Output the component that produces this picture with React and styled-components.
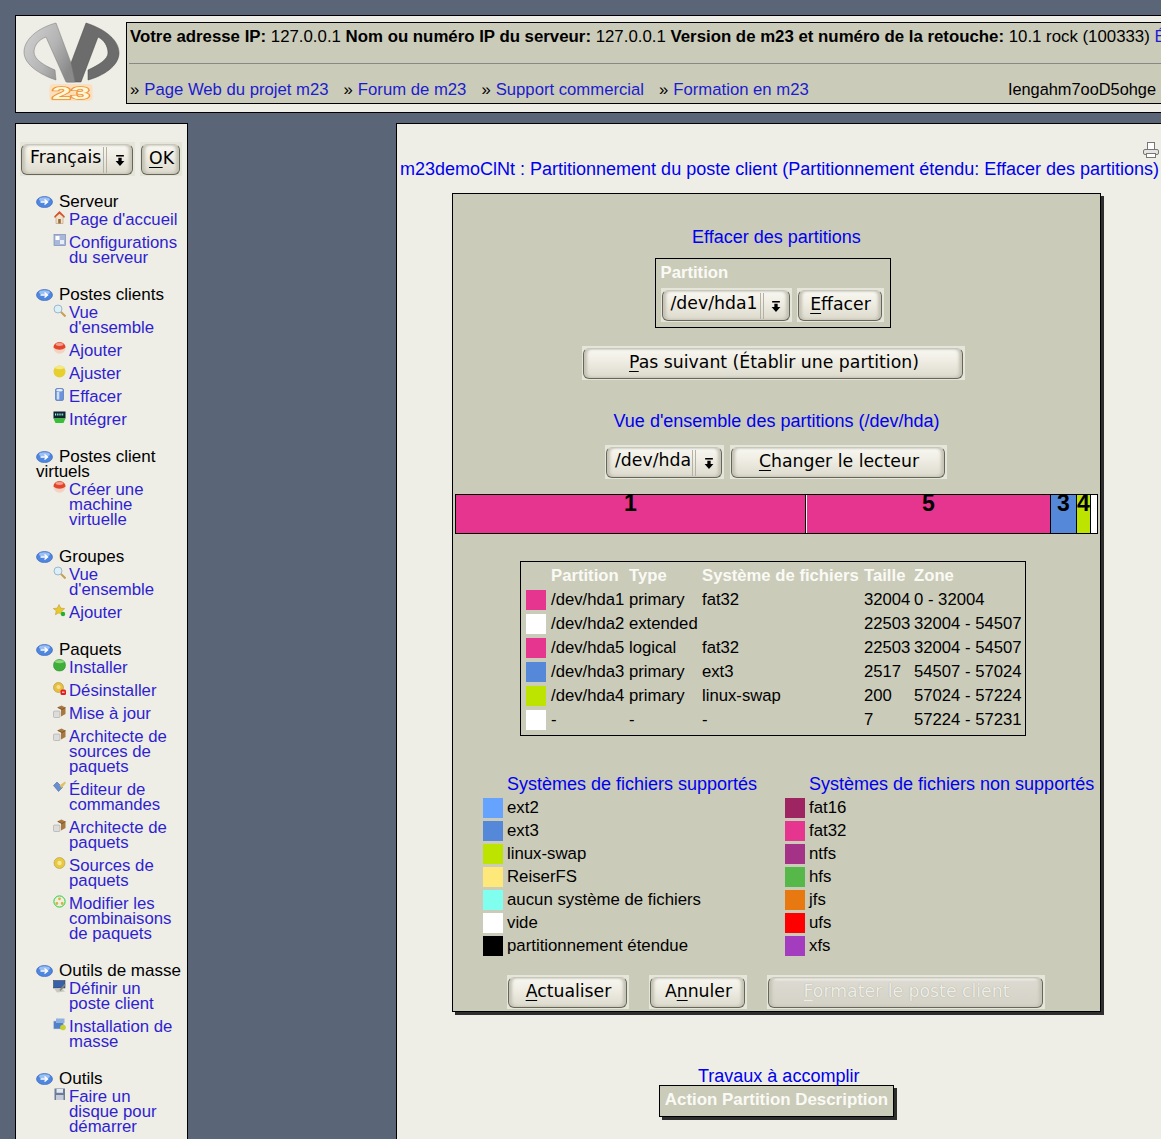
import React from 'react'
import styled, { createGlobalStyle } from 'styled-components'

const GlobalStyle = createGlobalStyle`
    html, body {
        margin: 0;
        padding: 0;
        height: 1139px;
        overflow: hidden;
        background: #5a6577;
        font-family: "Liberation Sans", Arial, sans-serif;
        font-size: 16.7px;
    }
`;

const Page = styled.div`
    width: 1400px;
    height: 1139px;
    padding: 15px;
    box-sizing: border-box;
    display: flex;
    flex-direction: column;
    gap: 10px;
`;

const Header = styled.div`
    display: flex;
    align-items: flex-start;
    height: 98px;
    box-sizing: border-box;
    border: 1px solid #000;
    background: #eeede6;
    padding: 6px 0 0 6px;
    gap: 5px;
`;

const LogoBox = styled.div`
    width: 99px;
    height: 90px;
    flex: none;
`;

const InfoBox = styled.div`
    flex: 1;
    height: 82px;
    box-sizing: border-box;
    border: 1px solid #000;
    background: #cbcbb9;
    padding: 4px 2px 0 2px;
    line-height: 19px;
    white-space: nowrap;
    color: #000;
`;

const InfoLine = styled.div`
    font-size: 16.82px;
    padding-left: 1px;
`;

const Rule = styled.hr`
    border: 0;
    border-top: 1px solid #888;
    margin: 17px 0 16px 0;
`;

const LinksRow = styled.div`
    display: flex;
    width: 1026px;
    padding-left: 1px;
    font-size: 16.7px;
`;

const Chevron = styled.span`
    margin-right: 5px;
`;

const TopLink = styled.span`
    color: #1c1ccf;
    margin-right: ${p => p.$end ? 0 : 15}px;
`;

const ServerKey = styled.span`
    margin-left: auto;
    font-size: 16.35px;
`;

const Columns = styled.div`
    display: flex;
    align-items: flex-start;
    gap: 208px;
    flex: 1;
`;

const Sidebar = styled.nav`
    width: 173px;
    height: 1020px;
    flex: none;
    box-sizing: border-box;
    border: 1px solid #000;
    background: #eeede6;
    padding: 17px 5px 0 5px;
`;

const LangRow = styled.div`
    display: flex;
    gap: 5px;
    margin: 1px 0 18px -1px;
`;

const ButtonHalo = styled.div`
    width: ${p => p.$width}px;
    height: 34px;
    box-sizing: border-box;
    padding: 2px 2px 1px 1px;
    background: #e6e5da;
    flex: none;
`;

const ButtonFace = styled.div`
    display: flex;
    align-items: center;
    justify-content: ${p => p.$select ? 'space-between' : 'center'};
    box-sizing: border-box;
    width: 100%;
    height: 100%;
    border: 1px solid #66665a;
    border-top-color: #c9c7b9;
    border-radius: 6px;
    background: ${p => p.$disabled
        ? 'linear-gradient(#dddbd1, #d4d2c7)'
        : 'linear-gradient(#f8f7f0 0%, #eeece2 45%, #dcd9cc 100%)'};
    box-shadow: inset 3px 0 3px #c4c2b4, inset -3px 0 3px #c4c2b4, inset 0 2px 2px #fff;
    font-family: "DejaVu Sans", sans-serif;
    font-size: 17.3px;
    color: ${p => p.$disabled ? '#efeee6' : '#000'};
    text-shadow: ${p => p.$disabled ? '0 0 1px #9a9a90' : 'none'};
    white-space: nowrap;
    padding: ${p => p.$select ? '0 0 5px 8px' : '0 0 4px 2px'};
`;

const Under = styled.span`
    text-decoration: underline;
    text-underline-offset: 3px;
`;

const SelectArrow = styled.span`
    display: flex;
    align-items: center;
    justify-content: center;
    align-self: stretch;
    width: 25px;
    margin: 2px 0 -4px 0;
    border-left: 4px double #b4b2a5;
`;

const ArrowGlyph = () => (
    <svg width="10" height="11" viewBox="0 0 9 10">
        <rect x="1" y="0" width="7" height="1.4" fill="#000" />
        <path d="M3 2.5h3v3h2.5L4.5 10 .5 5.5H3z" fill="#000" />
    </svg>
);

const Button = ({ width, disabled, children }) => (
    <ButtonHalo $width={width}>
        <ButtonFace $disabled={disabled}><span>{children}</span></ButtonFace>
    </ButtonHalo>
);

const Select = ({ width, value }) => (
    <ButtonHalo $width={width}>
        <ButtonFace $select>{value}<SelectArrow><ArrowGlyph /></SelectArrow></ButtonFace>
    </ButtonHalo>
);

const Section = styled.div`
    margin: 0 0 22px 15px;
`;

const SectionTitle = styled.div`
    font-size: 17px;
    line-height: 15px;
    color: #000;
    margin-bottom: 3px;
    width: 150px;
`;

const BlueBall = styled.svg`
    width: 17px;
    height: 12px;
    vertical-align: -1px;
    margin-right: 6px;
`;

const MenuItem = styled.div`
    display: flex;
    margin: 0 0 8px 17px;
    font-size: 16.75px;
    line-height: 15px;
    color: #2f1fd0;
`;

const MenuLabel = styled.span`
    width: ${p => p.$wrap ? `${p.$wrap}px` : 'auto'};
`;

const MenuIcon = styled.svg`
    width: 13px;
    height: 13px;
    flex: none;
    margin: -1px 3px 0 0;
`;

const Main = styled.main`
    flex: 1;
    height: 1020px;
    box-sizing: border-box;
    border: 1px solid #000;
    background: #eeede6;
    padding: 18px 0 0 3px;
`;

const PrintRow = styled.div`
    height: 17px;
    padding-left: 743px;
`;

const PrintIcon = styled.svg`
    display: block;
    width: 16px;
    height: 17px;
`;

const PageTitle = styled.div`
    color: #0000f0;
    font-size: 18px;
    line-height: 20px;
    height: 20px;
    white-space: nowrap;
`;

const Panel = styled.div`
    width: 649px;
    height: 819px;
    box-sizing: border-box;
    margin: 14px 0 0 52px;
    border: 1px solid #000;
    background: #cbcbb9;
    box-shadow: 3px 3px 0 #2e2e2e;
    display: flex;
    flex-direction: column;
    align-items: center;
    padding-top: 33px;
`;

const BlueHeading = styled.div`
    color: #0000f0;
    font-size: 18px;
    line-height: 20px;
    white-space: nowrap;
`;

const OverviewHeading = styled(BlueHeading)`
    margin-top: 31px;
`;

const PartitionBox = styled.div`
    width: 236px;
    height: 70px;
    box-sizing: border-box;
    border: 1px solid #000;
    margin: 11px 0 0 -8px;
    padding: 4px 5px;
`;

const BoxLabel = styled.div`
    color: #fafaf5;
    font-weight: bold;
    line-height: 19px;
    margin-bottom: 6px;
`;

const ButtonRow = styled.div`
    display: flex;
    gap: ${p => p.$gap || 5}px;
`;

const NextRow = styled.div`
    margin: 18px 0 0 -6px;
`;

const DriveRow = styled(ButtonRow)`
    margin: 14px 0 0 -1px;
`;

const DiskBar = styled.div`
    display: flex;
    width: 643px;
    height: 40px;
    box-sizing: border-box;
    border: 1px solid #000;
    background: #fff;
    margin: 15px 0 0 0;
`;

const DiskPart = styled.div`
    box-sizing: border-box;
    width: ${p => p.$width}px;
    flex: none;
    background: ${p => p.$color};
    border-right: 1px solid #000;
    border-left: ${p => p.$split ? '1px solid #fff' : '0'};
    text-align: center;
    font-weight: bold;
    font-size: 23px;
    line-height: 17px;
    color: #000;
    &:last-child {
        border-right: 0;
    }
`;

const PartTable = styled.div`
    display: grid;
    grid-template-columns: 20px 73px 68px 157px 45px max-content;
    column-gap: 5px;
    margin: 27px 0 0 -7px;
    width: 506px;
    height: 175px;
    box-sizing: border-box;
    border: 1px solid #000;
    padding: 2px 4px 0 5px;
    align-items: center;
    grid-auto-rows: 24px;
    white-space: nowrap;
    color: #000;
`;

const ColHead = styled.div`
    color: #fafaf5;
    font-weight: bold;
`;

const Swatch = styled.div`
    width: 20px;
    height: 20px;
    flex: none;
    background: ${p => p.$color};
`;

const LegendRow = styled.div`
    display: flex;
    align-self: flex-start;
    margin: 37px 0 0 30px;
`;

const LegendCol = styled.div`
    width: 302px;
    flex: none;
`;

const LegendHead = styled(BlueHeading)`
    margin: 0 0 1px 24px;
    line-height: 22px;
`;

const LegendItem = styled.div`
    display: flex;
    align-items: center;
    gap: 4px;
    height: 23px;
    font-size: 16.8px;
    color: #000;
    white-space: nowrap;
`;

const ActionRow = styled.div`
    display: flex;
    align-self: flex-start;
    gap: 20px;
    margin: 18px 0 0 54px;
`;

const TodoTitle = styled(BlueHeading)`
    margin: 54px 0 0 298px;
`;

const TodoBox = styled.div`
    width: 235px;
    height: 32px;
    box-sizing: border-box;
    margin: -1px 0 0 259px;
    border: 1px solid #000;
    background: #cbcbb9;
    box-shadow: 3px 3px 0 #2e2e2e;
    color: #fafaf5;
    font-size: 16.9px;
    font-weight: bold;
    text-align: center;
    line-height: 27px;
    white-space: nowrap;
`;

const Ball = () => (
    <BlueBall viewBox="0 0 17 12">
        <ellipse cx="8.5" cy="6" rx="8" ry="5.6" fill="#4f86e0" stroke="#2f5fb8" strokeWidth="0.6" />
        <ellipse cx="8.5" cy="3.4" rx="5.5" ry="2.2" fill="#9cc0f4" />
        <path d="M4.5 6h6.500M8.500 3.500L11.500 6 8.500 8.500" stroke="#fff" strokeWidth="1.5" fill="none" />
    </BlueBall>
);

const drawings = {
    home: <><path d="M6.500 1L1.500 6.500h1.500V12.500h7V6.500h1.500z" fill="#efe2cc" stroke="#b08a66" strokeWidth="0.5" /><path d="M6.500 0L1 5.500 2.300 6.500 6.500 2.800 10.700 6.500 12 5.500z" fill="#d8532c" /><rect x="5.200" y="8" width="2.600" height="4.500" fill="#9a6a3a" /></>,
    config: <><rect x="1" y="0.500" width="11.500" height="11" fill="#a8b8d8" stroke="#7080b0" strokeWidth="0.6" /><rect x="2.500" y="2" width="4" height="4" fill="#fff" /><rect x="7" y="6" width="4" height="4" fill="#e8eef8" /></>,
    search: <><circle cx="5" cy="5" r="4" fill="#dceef8" stroke="#9ab8cc" /><path d="M8 8L12.500 12.500" stroke="#c8a050" strokeWidth="2" /></>,
    red: <><ellipse cx="6.500" cy="6" rx="6" ry="5.800" fill="#f3d2c4" /><path d="M0.500 5.500C0.500 2.200 3 0.200 6.500 0.200S12.500 2.200 12.500 5.500C9 8.500 4 8.500 0.500 5.500z" fill="#e2452a" /><ellipse cx="6.500" cy="2.500" rx="3.800" ry="1.400" fill="#f4a090" /></>,
    yellow: <><ellipse cx="6.500" cy="6.500" rx="6" ry="5.900" fill="#e8cf30" /><ellipse cx="6.500" cy="2.500" rx="4.500" ry="1.700" fill="#f4e884" /></>,
    bin: <><rect x="2.500" y="0.500" width="8" height="12" rx="1.500" fill="#6c94dc" stroke="#4668b0" strokeWidth="0.6" /><ellipse cx="6.500" cy="2.200" rx="3.200" ry="1.200" fill="#e8f0ff" /><rect x="3.800" y="4" width="2.500" height="7.500" fill="#d0def6" /></>,
    chip: <><rect x="0.500" y="0.500" width="12" height="7" fill="#10202e" /><path d="M2 3.500h9" stroke="#9fe" strokeWidth="2" strokeDasharray="1.200 1" /><path d="M0.500 7.500h12l-2 4.500H2.500z" fill="#35c035" /></>,
    star: <><path d="M6 0.500l1.700 3.600 4 .5-2.900 2.700.8 3.900L6 8.800l-3.600 1.900.8-3.900L.3 4.600l4-.5z" fill="#e8c830" stroke="#b89820" strokeWidth="0.500" /><circle cx="10" cy="10" r="2.200" fill="#20b030" /></>,
    green: <><rect x="0.500" y="0.500" width="12" height="11.500" rx="5.500" fill="#3fae3a" stroke="#2e8a2c" strokeWidth="0.500" /><ellipse cx="6.500" cy="2.600" rx="4.500" ry="1.600" fill="#8ad87a" /></>,
    remove: <><circle cx="5.500" cy="5.500" r="5" fill="#e8c040" stroke="#a88020" strokeWidth="0.500" /><circle cx="5.500" cy="5" r="2" fill="#f6e090" /><rect x="7.500" y="7.500" width="5.500" height="5.500" rx="1.500" fill="#e02020" /><path d="M9 10.200h2.500" stroke="#fff" /></>,
    box: <><rect x="0.500" y="6" width="6.500" height="6.500" rx="1" fill="#dcdcdc" stroke="#999" strokeWidth="0.500" /><path d="M4 2.500L8.500 0.500 12.500 2.500V9L8 11.500V4.500z" fill="#a87840" /><path d="M5 2.500l4 2 3.500-2" stroke="#6a4a2a" fill="none" strokeWidth="0.700" /></>,
    brush: <><path d="M0.500 4.500L4 1l5.500 5.500-4 4z" fill="#6890d0" stroke="#3c5c98" strokeWidth="0.500" /><path d="M6.500 4.500L12 0.500l0.800 1.500L8.800 7z" fill="#e0c060" /></>,
    gear: <><circle cx="6.500" cy="6" r="5.500" fill="#e8c840" stroke="#a89030" strokeWidth="0.500" /><circle cx="6.500" cy="6" r="2.200" fill="#f6e89a" /></>,
    combo: <><circle cx="6.500" cy="6.500" r="5.600" fill="#f0eee0" stroke="#20d030" /><circle cx="6.500" cy="3.800" r="1.400" fill="#d8b040" /><circle cx="3.800" cy="8.500" r="1.400" fill="#d8b040" /><circle cx="9.200" cy="8.500" r="1.400" fill="#d8b040" /></>,
    screen: <><rect x="0.500" y="0.500" width="11.500" height="7.500" fill="#3860a8" stroke="#334" strokeWidth="0.500" /><path d="M1 8.500h8l3 3-8 1z" fill="#c8c8c0" /><path d="M7 10.500l5-6" stroke="#887" strokeWidth="1.600" /></>,
    mass: <><rect x="0.500" y="3" width="10" height="8" fill="#5080c8" stroke="#cfd8e8" strokeWidth="0.500" /><rect x="3" y="0.500" width="8.500" height="4.500" fill="#90b0e0" /><circle cx="10" cy="9.500" r="2.800" fill="#c8d030" /></>,
    disk: <><rect x="1.500" y="0.500" width="10.500" height="11.500" fill="#6a7c98" /><rect x="3.500" y="1" width="6.500" height="3.800" fill="#e4e8f0" /><rect x="3" y="7" width="7.500" height="5" fill="#c8ccd8" /></>,
};

const menu = [
    { title: 'Serveur', items: [['home', "Page d'accueil"], ['config', 'Configurations du serveur']] },
    { title: 'Postes clients', items: [['search', "Vue d'ensemble", 102], ['red', 'Ajouter'], ['yellow', 'Ajuster'], ['bin', 'Effacer'], ['chip', 'Intégrer']] },
    { title: 'Postes client virtuels', items: [['red', 'Créer une machine virtuelle', 90]] },
    { title: 'Groupes', items: [['search', "Vue d'ensemble", 102], ['star', 'Ajouter']] },
    { title: 'Paquets', items: [['green', 'Installer'], ['remove', 'Désinstaller'], ['box', 'Mise à jour'], ['box', 'Architecte de sources de paquets', 108], ['brush', 'Éditeur de commandes', 100], ['box', 'Architecte de paquets', 108], ['gear', 'Sources de paquets', 100], ['combo', 'Modifier les combinaisons de paquets', 108]] },
    { title: 'Outils de masse', items: [['screen', 'Définir un poste client', 100], ['mass', 'Installation de masse', 108]] },
    { title: 'Outils', items: [['disk', 'Faire un disque pour démarrer', 95]] },
];

const partitions = [
    ['#e5358f', '/dev/hda1', 'primary', 'fat32', '32004', '0 - 32004'],
    ['#fff', '/dev/hda2', 'extended', '', '22503', '32004 - 54507'],
    ['#e5358f', '/dev/hda5', 'logical', 'fat32', '22503', '32004 - 54507'],
    ['#5588d8', '/dev/hda3', 'primary', 'ext3', '2517', '54507 - 57024'],
    ['#bde400', '/dev/hda4', 'primary', 'linux-swap', '200', '57024 - 57224'],
    ['#fff', '-', '-', '-', '7', '57224 - 57231'],
];

const supported = [
    ['#66a3ff', 'ext2'], ['#5588d8', 'ext3'], ['#bde400', 'linux-swap'], ['#ffe87a', 'ReiserFS'],
    ['#80ffee', 'aucun système de fichiers'], ['#fff', 'vide'], ['#000', 'partitionnement étendue'],
];

const unsupported = [
    ['#9e2462', 'fat16'], ['#e5358f', 'fat32'], ['#a43388', 'ntfs'], ['#55b848', 'hfs'],
    ['#e87810', 'jfs'], ['#ff0000', 'ufs'], ['#a43cc0', 'xfs'],
];

const Logo = () => (
    <svg width="99" height="90" viewBox="-1 0 99 90">
        <defs>
            <linearGradient id="metal" x1="0" x2="1" y1="0" y2="0.600">
                <stop offset="0" stopColor="#d4d4d4" />
                <stop offset="0.600" stopColor="#b4b4b4" />
                <stop offset="1" stopColor="#8a8a8a" />
            </linearGradient>
        </defs>
        <path d="M63 1C82 7 96 18 96 31C96 44 80 54 65 58L65 48C76 43 85 37 85 31C85 24 81 18 75 15L58 60H44L48 41Z" fill="#6c6c6c" stroke="#444" strokeWidth="0.500" />
        <path d="M33 1L48 41L52 60H43L23 15C15 18 11 24 11 30C11 37 20 43 32 48L33 58C18 53 1 43 1 30C1 18 14 6 33 1Z" fill="url(#metal)" stroke="#777" strokeWidth="0.500" />
        <rect x="26.500" y="62" width="43" height="17" rx="4" fill="#fbe0c0" />
        <text x="48" y="76.500" textAnchor="middle" textLength="38" lengthAdjust="spacingAndGlyphs" fontFamily="Liberation Sans, sans-serif" fontWeight="bold" fontSize="17" fill="#fff8d8" stroke="#f09030" strokeWidth="1.500" paintOrder="stroke">23</text>
    </svg>
);

const App = () => {
    return (
        <>
            <GlobalStyle />
            <Page>
                <Header>
                    <LogoBox><Logo /></LogoBox>
                    <InfoBox>
                        <InfoLine>
                            <b>Votre adresse IP:</b> 127.0.0.1 <b>Nom ou numéro IP du serveur:</b> 127.0.0.1 <b>Version de m23 et numéro de la retouche:</b> 10.1 rock (100333) <TopLink>État</TopLink>
                        </InfoLine>
                        <Rule />
                        <LinksRow>
                            <Chevron>»</Chevron><TopLink>Page Web du projet m23</TopLink>
                            <Chevron>»</Chevron><TopLink>Forum de m23</TopLink>
                            <Chevron>»</Chevron><TopLink>Support commercial</TopLink>
                            <Chevron>»</Chevron><TopLink $end>Formation en m23</TopLink>
                            <ServerKey>Iengahm7ooD5ohge</ServerKey>
                        </LinksRow>
                    </InfoBox>
                </Header>
                <Columns>
                    <Sidebar>
                        <LangRow>
                            <Select width={115} value="Français" />
                            <Button width={42}><Under>O</Under>K</Button>
                        </LangRow>
                        {menu.map(group => (
                            <Section key={group.title}>
                                <SectionTitle><Ball />{group.title}</SectionTitle>
                                {group.items.map(([icon, label, width]) => (
                                    <MenuItem key={label}>
                                        <MenuIcon viewBox="0 0 13 13">{drawings[icon]}</MenuIcon>
                                        <MenuLabel $wrap={width}>{label}</MenuLabel>
                                    </MenuItem>
                                ))}
                            </Section>
                        ))}
                    </Sidebar>
                    <Main>
                        <PrintRow>
                            <PrintIcon viewBox="0 0 16 17">
                                <rect x="4.500" y="0.500" width="7" height="7" fill="#fff" stroke="#777" />
                                <rect x="0.500" y="7.500" width="15" height="5" rx="1.500" fill="#e4e4e0" stroke="#777" />
                                <rect x="3.500" y="11.500" width="9" height="4" fill="#fff" stroke="#777" />
                            </PrintIcon>
                        </PrintRow>
                        <PageTitle>m23demoClNt : Partitionnement du poste client (Partitionnement étendu: Effacer des partitions)</PageTitle>
                        <Panel>
                            <BlueHeading>Effacer des partitions</BlueHeading>
                            <PartitionBox>
                                <BoxLabel>Partition</BoxLabel>
                                <ButtonRow>
                                    <Select width={131} value="/dev/hda1" />
                                    <Button width={87}><Under>E</Under>ffacer</Button>
                                </ButtonRow>
                            </PartitionBox>
                            <NextRow>
                                <Button width={383}><Under>P</Under>as suivant (Établir une partition)</Button>
                            </NextRow>
                            <OverviewHeading>Vue d'ensemble des partitions (/dev/hda)</OverviewHeading>
                            <DriveRow $gap={6}>
                                <Select width={119} value="/dev/hda" />
                                <Button width={217}><Under>C</Under>hanger le lecteur</Button>
                            </DriveRow>
                            <DiskBar>
                                <DiskPart $width={350} $color="#e5358f">1</DiskPart>
                                <DiskPart $width={245} $color="#e5358f" $split>5</DiskPart>
                                <DiskPart $width={26} $color="#5588d8">3</DiskPart>
                                <DiskPart $width={14} $color="#bde400">4</DiskPart>
                                <DiskPart $width={6} $color="#fff" />
                            </DiskBar>
                            <PartTable>
                                <span />
                                <ColHead>Partition</ColHead>
                                <ColHead>Type</ColHead>
                                <ColHead>Système de fichiers</ColHead>
                                <ColHead>Taille</ColHead>
                                <ColHead>Zone</ColHead>
                                {partitions.map(([color, ...cells], rowIndex) => (
                                    <React.Fragment key={rowIndex}>
                                        <Swatch $color={color} />
                                        {cells.map((cell, i) => <span key={i}>{cell}</span>)}
                                    </React.Fragment>
                                ))}
                            </PartTable>
                            <LegendRow>
                                <LegendCol>
                                    <LegendHead>Systèmes de fichiers supportés</LegendHead>
                                    {supported.map(([color, label]) => (
                                        <LegendItem key={label}><Swatch $color={color} />{label}</LegendItem>
                                    ))}
                                </LegendCol>
                                <LegendCol>
                                    <LegendHead>Systèmes de fichiers non supportés</LegendHead>
                                    {unsupported.map(([color, label]) => (
                                        <LegendItem key={label}><Swatch $color={color} />{label}</LegendItem>
                                    ))}
                                </LegendCol>
                            </LegendRow>
                            <ActionRow>
                                <Button width={122}><Under>A</Under>ctualiser</Button>
                                <Button width={98}>A<Under>n</Under>nuler</Button>
                                <Button width={278} disabled><Under>F</Under>ormater le poste client</Button>
                            </ActionRow>
                        </Panel>
                        <TodoTitle>Travaux à accomplir</TodoTitle>
                        <TodoBox>Action Partition Description</TodoBox>
                    </Main>
                </Columns>
            </Page>
        </>
    )
}

export default App
